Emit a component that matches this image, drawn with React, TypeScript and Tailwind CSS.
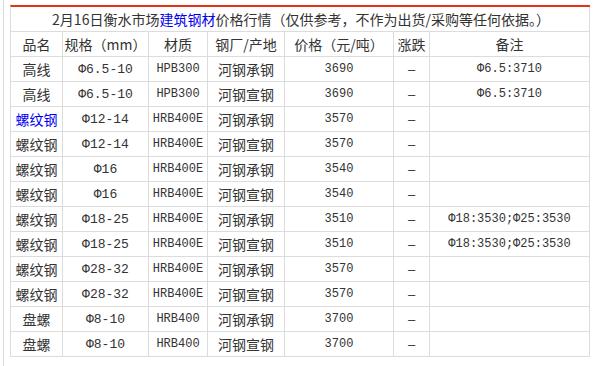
const rows = [
  { name: "高线", spec: "Φ6.5-10", grade: "HPB300", mill: "河钢承钢", price: "3690", note: "Φ6.5:3710" },
  { name: "高线", spec: "Φ6.5-10", grade: "HPB300", mill: "河钢宣钢", price: "3690", note: "Φ6.5:3710" },
  { name: "螺纹钢", spec: "Φ12-14", grade: "HRB400E", mill: "河钢承钢", price: "3570", note: "", link: true },
  { name: "螺纹钢", spec: "Φ12-14", grade: "HRB400E", mill: "河钢宣钢", price: "3570", note: "" },
  { name: "螺纹钢", spec: "Φ16", grade: "HRB400E", mill: "河钢承钢", price: "3540", note: "" },
  { name: "螺纹钢", spec: "Φ16", grade: "HRB400E", mill: "河钢宣钢", price: "3540", note: "" },
  { name: "螺纹钢", spec: "Φ18-25", grade: "HRB400E", mill: "河钢承钢", price: "3510", note: "Φ18:3530;Φ25:3530" },
  { name: "螺纹钢", spec: "Φ18-25", grade: "HRB400E", mill: "河钢宣钢", price: "3510", note: "Φ18:3530;Φ25:3530" },
  { name: "螺纹钢", spec: "Φ28-32", grade: "HRB400E", mill: "河钢承钢", price: "3570", note: "" },
  { name: "螺纹钢", spec: "Φ28-32", grade: "HRB400E", mill: "河钢宣钢", price: "3570", note: "" },
  { name: "盘螺", spec: "Φ8-10", grade: "HRB400", mill: "河钢承钢", price: "3700", note: "" },
  { name: "盘螺", spec: "Φ8-10", grade: "HRB400", mill: "河钢宣钢", price: "3700", note: "" },
];

const headers = ["品名", "规格（mm）", "材质", "钢厂/产地", "价格（元/吨）", "涨跌", "备注"];

const cell = "h-[25px] flex items-center justify-center border-r border-b border-[#dcdcdc] whitespace-nowrap";
const mono = "font-['Liberation_Mono',monospace] text-[12px]";

export default function App() {
  return (
    <div
      className="w-[595px] h-[366px] bg-white pl-[3px] text-[#333] overflow-hidden"
      style={{ fontFamily: '"Noto Sans CJK SC", "Noto Sans", sans-serif' }}
    >
      <div className="h-full border-l border-[#dcdcdc] pl-[6px] pt-[5px]">
        <div className="w-[580px] border-t-2 border-t-[#e3321b] border-l border-l-[#dcdcdc] grid grid-cols-[52px_86px_59px_77px_109px_36px_160px] text-[14px] leading-none">
          <div className={`${cell} col-span-7 pl-[2px]`}>
            2月16日衡水市场<span className="text-[#0000ee]">建筑钢材</span>价格行情（仅供参考，不作为出货/采购等任何依据。）
          </div>

          {headers.map((h) => (
            <div key={h} className={cell}>
              {h}
            </div>
          ))}

          {rows.map((r, i) => (
            <div key={i} className="contents">
              <div className={`${cell} ${r.link ? "text-[#0000ee]" : ""}`}>{r.name}</div>
              <div className={`${cell} ${mono} text-[13px]`}>{r.spec}</div>
              <div className={`${cell} ${mono}`}>{r.grade}</div>
              <div className={cell}>{r.mill}</div>
              <div className={`${cell} ${mono}`}>{r.price}</div>
              <div className={`${cell} font-['Liberation_Sans',sans-serif] text-[13px]`}>–</div>
              <div className={`${cell} ${mono}`}>{r.note}</div>
            </div>
          ))}
        </div>
      </div>
    </div>
  );
}
